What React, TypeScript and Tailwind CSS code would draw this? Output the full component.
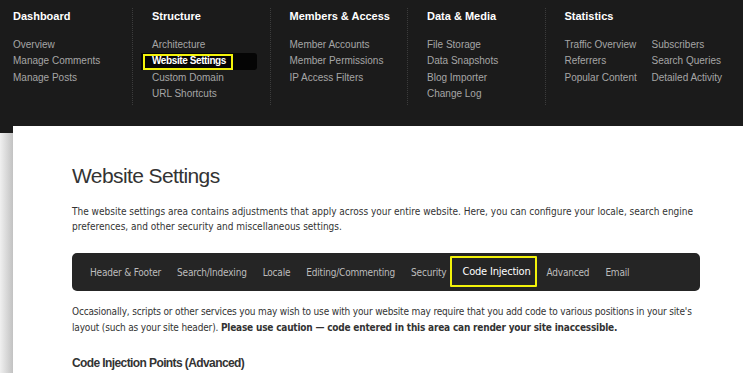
import React from 'react';

const NAV = [
  { title: 'Dashboard', links: ['Overview', 'Manage Comments', 'Manage Posts'] },
  { title: 'Structure', links: ['Architecture', 'Website Settings', 'Custom Domain', 'URL Shortcuts'] },
  { title: 'Members & Access', links: ['Member Accounts', 'Member Permissions', 'IP Access Filters'] },
  { title: 'Data & Media', links: ['File Storage', 'Data Snapshots', 'Blog Importer', 'Change Log'] },
];

const STATS = [
  ['Traffic Overview', 'Referrers', 'Popular Content'],
  ['Subscribers', 'Search Queries', 'Detailed Activity'],
];

const TABS = ['Header & Footer', 'Search/Indexing', 'Locale', 'Editing/Commenting', 'Security', 'Code Injection', 'Advanced', 'Email'];

const helv = "font-['Liberation_Sans','Helvetica',sans-serif]";
const tahoma = "font-['DejaVu_Sans_Condensed','DejaVu_Sans',sans-serif]";

const NavLink = ({ label }: { label: string }) => {
  if (label === 'Website Settings') {
    return (
      <li className="relative -ml-[11px] mr-[13px] pl-[11px] bg-[#050505] rounded-r-[3px] text-white font-bold tracking-[-0.4px]">
        {label}
        <span className="absolute left-[2px] top-[1px] w-[90px] h-[16px] border-2 border-[#f2f20a]" />
      </li>
    );
  }
  return <li>{label}</li>;
};

export default function App() {
  return (
    <div className="w-[743px] h-[373px] overflow-hidden bg-white">
      {/* top menu */}
      <div className={`h-[126px] bg-[#1b1b1b] flex pt-[8px] ${helv}`}>
        {NAV.map((col, i) => (
          <div
            key={col.title}
            className={
              i === 0
                ? 'w-[132px] h-[97px] pl-[13px] shrink-0'
                : 'w-[137.5px] h-[97px] pl-[19px] shrink-0 border-l border-dotted border-[#3c3c3c]'
            }
          >
            <h2 className="text-[11px] leading-[16px] font-bold text-white">{col.title}</h2>
            <ul className="mt-[13px] text-[10px] leading-[16.33px] text-[#a6a6a6]">
              {col.links.map(l => (
                <NavLink key={l} label={l} />
              ))}
            </ul>
          </div>
        ))}
        <div className="w-[199px] h-[97px] pl-[19px] shrink-0 border-l border-dotted border-[#3c3c3c]">
          <h2 className="text-[11px] leading-[16px] font-bold text-white">Statistics</h2>
          <div className="mt-[13px] flex text-[10px] leading-[16.33px] text-[#a6a6a6]">
            {STATS.map((c, i) => (
              <ul key={i} className={i === 0 ? 'w-[87px]' : ''}>
                {c.map(l => (
                  <li key={l}>{l}</li>
                ))}
              </ul>
            ))}
          </div>
        </div>
      </div>

      {/* body */}
      <div className="flex h-[247px]">
        <div className="w-[13px] shrink-0 flex flex-col">
          <div className="h-[7px] bg-[#1b1b1b]" />
          <div className="flex-1 bg-gradient-to-r from-[#f0f0f0] to-[#c2c2c2]" />
        </div>
        <div className="flex-1 min-w-0 pl-[59px] pr-[43px] pt-[38px] text-[#333]">
          <h1 className={`text-[21px] leading-[24px] tracking-[-0.6px] ${helv}`}>Website Settings</h1>
          <p className={`mt-[16px] text-[10px] leading-[15px] whitespace-nowrap ${tahoma}`}>
            The website settings area contains adjustments that apply across your entire website. Here, you can configure your locale, search engine
            <br />
            preferences, and other security and miscellaneous settings.
          </p>
          <div className={`mt-[19px] h-[38px] rounded-[5px] bg-[#252525] flex items-center pl-[10px] text-[10px] tracking-[-0.2px] text-[#bdbdbd] ${tahoma}`}>
            {TABS.map(t =>
              t === 'Code Injection' ? (
                <span key={t} className="relative px-[8px] text-white text-[11px]">
                  {t}
                  <span className="absolute -left-[4px] right-[2px] -top-[8px] -bottom-[7px] border-2 border-[#f2f20a] rounded-[1px]" />
                </span>
              ) : (
                <span key={t} className="px-[8px]">
                  {t}
                </span>
              )
            )}
          </div>
          <p className={`mt-[13px] text-[10px] leading-[16px] tracking-[-0.16px] whitespace-nowrap ${tahoma}`}>
            Occasionally, scripts or other services you may wish to use with your website may require that you add code to various positions in your site's
            <br />
            layout (such as your site header). <b className="tracking-[-0.2px]">Please use caution — code entered in this area can render your site inaccessible.</b>
          </p>
          <h3 className={`mt-[19px] text-[12px] leading-[16px] font-bold tracking-[-0.6px] ${helv}`}>Code Injection Points (Advanced)</h3>
        </div>
      </div>
    </div>
  );
}
